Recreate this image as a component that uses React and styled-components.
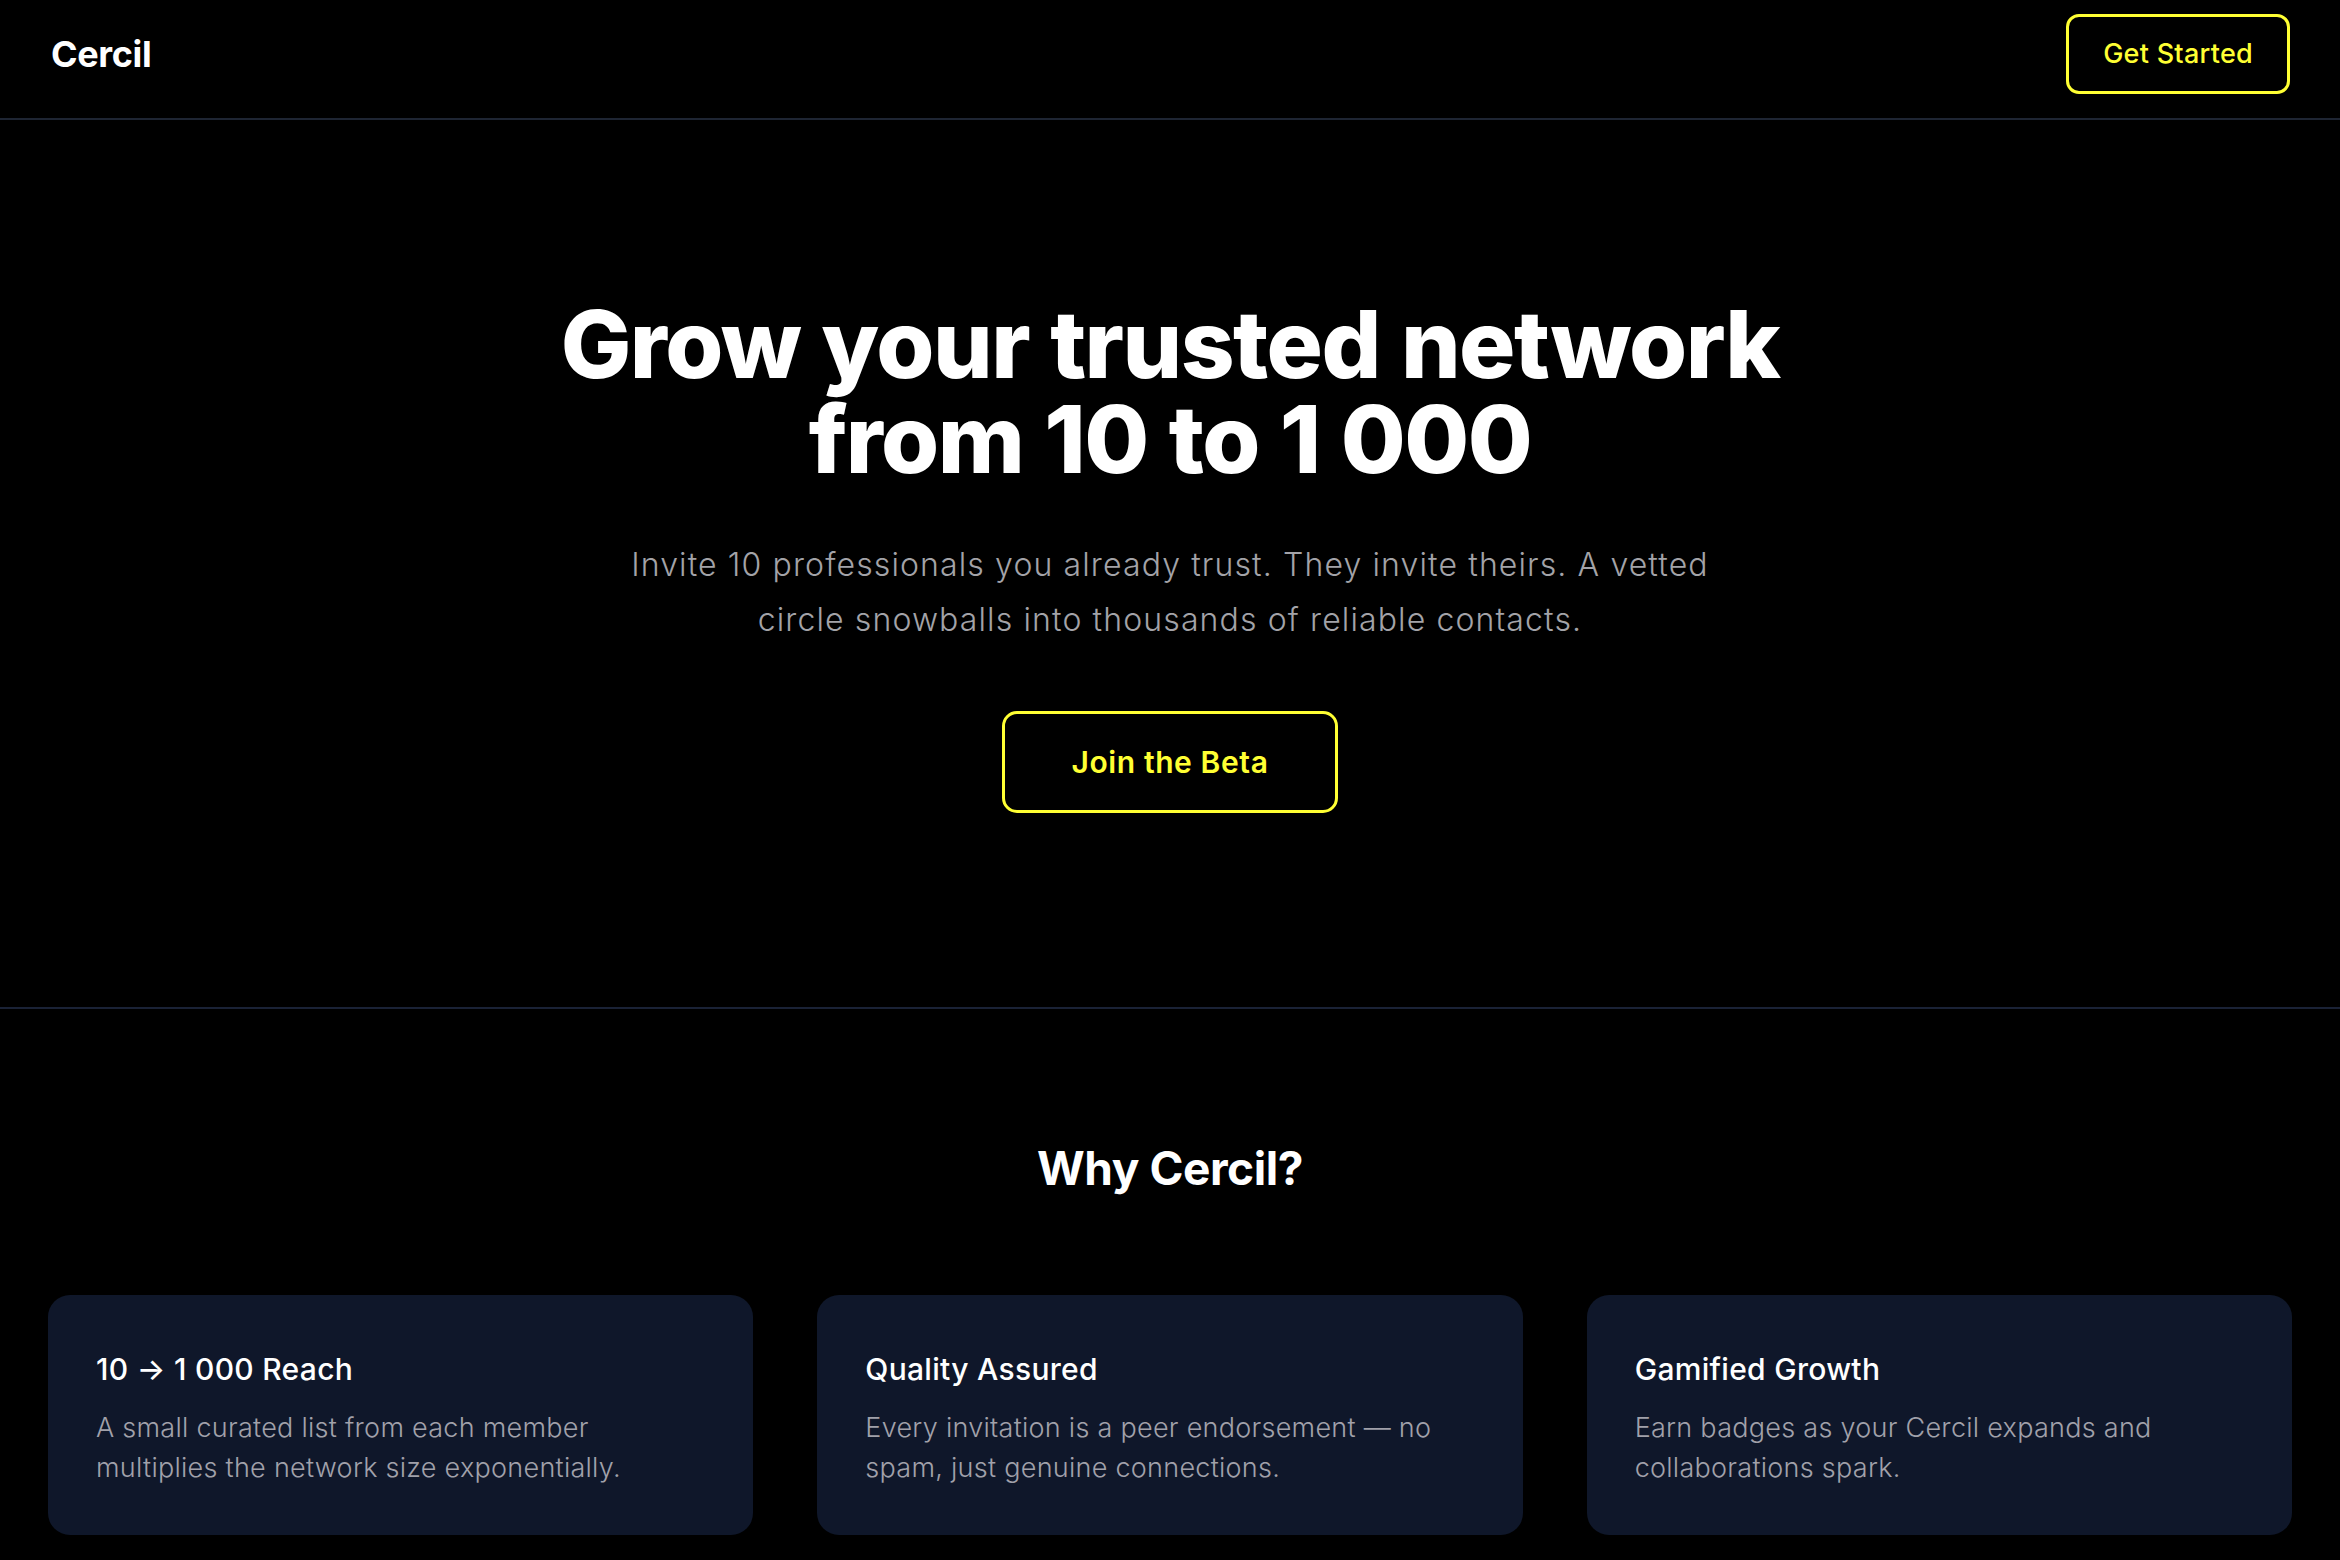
import React from "react";
import styled, { createGlobalStyle } from "styled-components";

const GlobalStyle = createGlobalStyle`
  * { box-sizing: border-box; }
  html, body {
    margin: 0;
    padding: 0;
    background: #000;
    color: #fff;
    font-family: Inter, "Noto Sans", "Liberation Sans", sans-serif;
  }
`;

const features = [
    {
        title: "10 → 1 000 Reach",
        text: "A small curated list from each member multiplies the network size exponentially.",
    },
    {
        title: "Quality Assured",
        text: "Every invitation is a peer endorsement — no spam, just genuine connections.",
    },
    {
        title: "Gamified Growth",
        text: "Earn badges as your Cercil expands and collaborations spark.",
    },
];

const App = () => {
    return (
        <Page>
            <GlobalStyle />
            <Header>
                <Logo>Cercil</Logo>
                <OutlineButton $size="small">Get Started</OutlineButton>
            </Header>
            <Hero>
                <Title>Grow your trusted network from 10 to 1 000</Title>
                <Subtitle>
                    Invite 10 professionals you already trust. They invite theirs. A vetted
                    circle snowballs into thousands of reliable contacts.
                </Subtitle>
                <OutlineButton $size="large">Join the Beta</OutlineButton>
            </Hero>
            <Features>
                <SectionTitle>Why Cercil?</SectionTitle>
                <CardGrid>
                    {features.map((feature) => (
                        <Card key={feature.title}>
                            <CardTitle>{feature.title}</CardTitle>
                            <CardText>{feature.text}</CardText>
                        </Card>
                    ))}
                </CardGrid>
            </Features>
        </Page>
    );
};

export default App;

const Page = styled.div`
  min-height: 100vh;
  background: #000;
`;

const Header = styled.header`
  display: flex;
  align-items: center;
  justify-content: space-between;
  padding: 14px 50px 24px 51px;
  border-bottom: 2px solid #1e2533;
`;

const Logo = styled.div`
  font-size: 36px;
  font-weight: 700;
  letter-spacing: -0.01em;
  line-height: 44px;
`;

const OutlineButton = styled.button`
  font-family: inherit;
  background: transparent;
  color: #ffff33;
  border: 3px solid #ffff33;
  cursor: pointer;
  border-radius: ${(p) => (p.$size === "large" ? "15px" : "13px")};
  font-size: ${(p) => (p.$size === "large" ? "30px" : "27px")};
  font-weight: ${(p) => (p.$size === "large" ? 600 : 500)};
  line-height: ${(p) => (p.$size === "large" ? "42px" : "40px")};
  padding: ${(p) => (p.$size === "large" ? "27px 66px" : "17px 34px")};
  letter-spacing: ${(p) => (p.$size === "large" ? "0.02em" : "0.01em")};
`;

const Hero = styled.section`
  display: flex;
  flex-direction: column;
  align-items: center;
  text-align: center;
  padding: 177px 48px 194px;
  border-bottom: 2px solid #1a2236;
`;

const Title = styled.h1`
  margin: 0 0 50px;
  max-width: 1344px;
  font-size: 94px;
  line-height: 95px;
  font-weight: 800;
  letter-spacing: -0.016em;
  word-spacing: 0.02em;
`;

const Subtitle = styled.p`
  margin: 0 0 64px;
  max-width: 1100px;
  font-size: 32px;
  line-height: 55px;
  font-weight: 300;
  letter-spacing: 0.035em;
  color: #a3a3a8;
`;

const Features = styled.section`
  padding: 131px 48px 24px;
  display: flex;
  flex-direction: column;
  align-items: center;
`;

const SectionTitle = styled.h2`
  margin: 0 0 99px;
  font-size: 46px;
  line-height: 56px;
  font-weight: 700;
  letter-spacing: -0.01em;
`;

const CardGrid = styled.div`
  width: 100%;
  display: grid;
  grid-template-columns: repeat(3, 1fr);
  gap: 64px;
`;

const Card = styled.div`
  background: #0f172a;
  border-radius: 22px;
  padding: 53px 48px 44px;
  min-height: 240px;
`;

const CardTitle = styled.h3`
  margin: 0 0 18px;
  font-size: 30px;
  line-height: 42px;
  font-weight: 500;
  letter-spacing: 0.01em;
`;

const CardText = styled.p`
  margin: 0;
  font-size: 27px;
  line-height: 40px;
  font-weight: 300;
  letter-spacing: 0.01em;
  color: #a1a1aa;
`;
